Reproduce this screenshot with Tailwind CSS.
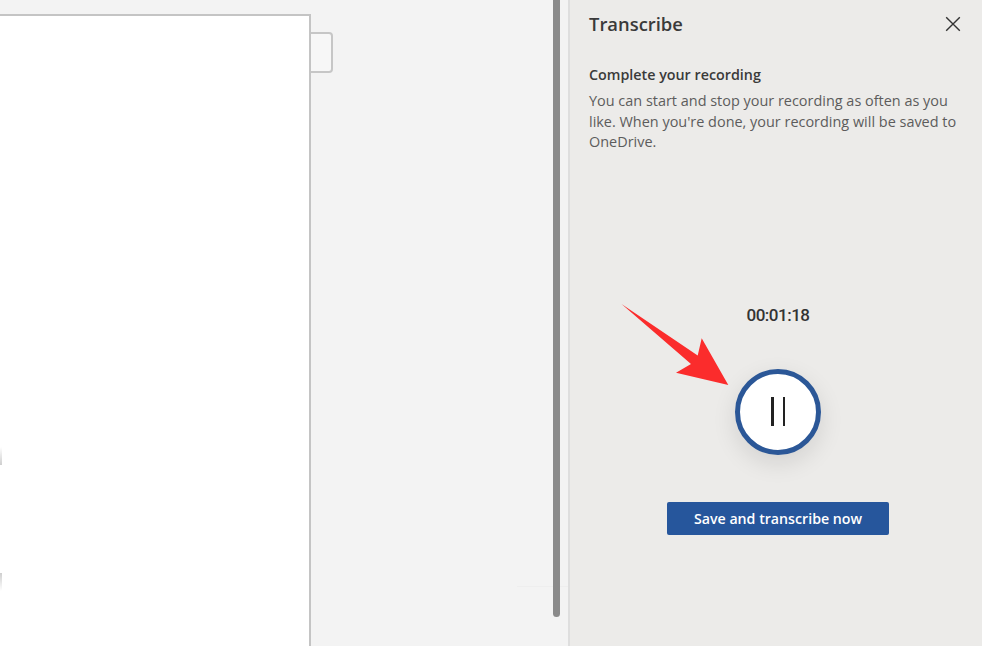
<!DOCTYPE html>
<html lang="en">
<head>
    <meta charset="UTF-8">
    <title>Transcribe</title>
    <script src="https://cdn.jsdelivr.net/npm/@tailwindcss/browser@4"></script>
</head>
<body class="bg-[#f3f3f3]">
    <div class="relative flex w-[982px] h-[646px] overflow-hidden font-['Open_Sans',sans-serif]">

        <!-- document area -->
        <div class="relative flex w-[568px] shrink-0 pt-[14px]">
            <div class="relative w-[311px] h-[660px] shrink-0 bg-white border-t-2 border-r-2 border-[#c4c4c4]">
                <div class="absolute left-0 top-[431px] w-[2px] h-[18px] bg-gradient-to-t from-[#cfcfcf] to-white"></div>
                <div class="absolute left-0 top-[557px] w-[2px] h-[18px] bg-gradient-to-b from-[#cfcfcf] to-white"></div>
            </div>
            <div class="w-[22px] h-[41px] mt-[18px] shrink-0 bg-[#f7f7f7] border-2 border-l-0 border-[#c6c6c6] rounded-r-[4px]"></div>
            <div class="absolute left-[517px] top-[586px] w-[51px] h-px bg-[#eeeeee]"></div>
            <div class="absolute left-[553px] top-0 w-[7px] h-[617px] bg-[#8a8a8a] rounded-b-full"></div>
        </div>

        <!-- transcribe pane -->
        <div class="flex-1 flex flex-col bg-[#ecebe9] border-l-2 border-[#dedede] pl-[19px] pr-[15px]">
            <div class="flex items-center justify-between mt-[11px] h-[26px]">
                <h1 class="text-[18.4px] leading-[26px] font-semibold text-[#3a3a3a]">Transcribe</h1>
                <svg class="w-[16px] h-[16px] mr-[6px]" viewBox="0 0 16 16" fill="none" stroke="#333" stroke-width="1.4"><path d="M1.2 1.2 14.8 14.8M14.8 1.2 1.2 14.8"/></svg>
            </div>
            <h2 class="mt-[28px] text-[14.3px] leading-[20px] font-semibold text-[#3a3a3a]">Complete your recording</h2>
            <p class="mt-[6px] text-[14.45px] leading-[20.5px] text-[#5c5c5c]">You can start and stop your recording as often as you like. When you're done, your recording will be saved to OneDrive.</p>

            <div class="flex flex-col items-center mt-[150px]">
                <div class="font-['Roboto',sans-serif] text-[17px] tracking-[-0.5px] leading-[24px] font-medium text-[#333]">00:01:18</div>
                <div class="mt-[42px] w-[86px] h-[86px] rounded-full bg-white border-[5px] border-[#2b5797] shadow-[0_8px_24px_rgba(0,0,0,0.11)] flex items-center justify-center gap-[9px]">
                    <span class="w-[2.5px] h-[29px] bg-[#222]"></span>
                    <span class="w-[2.5px] h-[29px] bg-[#222]"></span>
                </div>
                <button class="mt-[47px] w-[222px] h-[33px] pt-[1px] rounded-[2px] bg-[#26569c] text-white text-[14.2px] font-semibold">Save and transcribe now</button>
            </div>
        </div>

        <!-- annotation arrow -->
        <svg class="absolute left-0 top-0 pointer-events-none" width="982" height="646" viewBox="0 0 982 646">
            <path d="M621.5 304 697.7 355.5 701.7 338.3 728.3 385 676 372.7 691 364Z" fill="#fb2c2c"/>
        </svg>
    </div>
</body>
</html>
